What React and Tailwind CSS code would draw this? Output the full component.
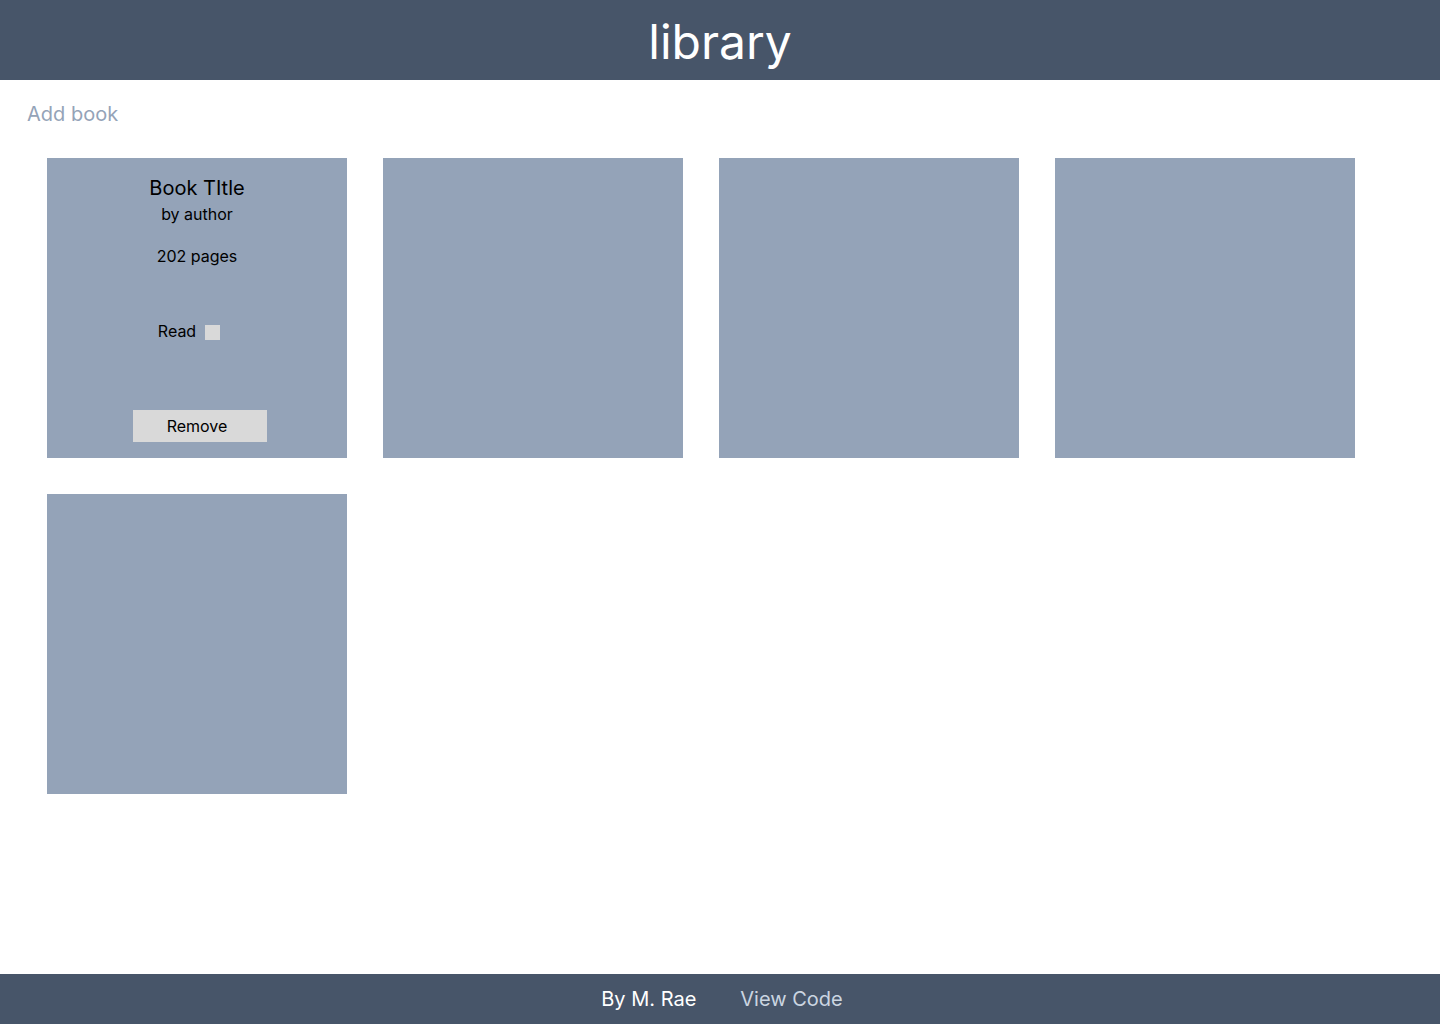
import React from 'react';

const books = [
  { title: 'Book TItle', author: 'author', pages: 202 },
  null,
  null,
  null,
  null,
];

function BookCard({ book }) {
  if (!book) return <div className="w-[300px] h-[300px] bg-[#94a3b8]" />;
  return (
    <div className="w-[300px] h-[300px] bg-[#94a3b8] flex flex-col items-center pt-4 text-black">
      <h2 className="text-xl leading-7">{book.title}</h2>
      <p className="text-base leading-6">by {book.author}</p>
      <p className="text-base leading-6 mt-[18px]">{book.pages} pages</p>
      <label className="flex items-center mt-[51px] mr-4 text-base leading-6">
        Read
        <span className="ml-[9px] mt-[3px] w-[15px] h-[15px] bg-[#d9d9d9]" />
      </label>
      <button className="mt-[67px] ml-[6px] w-[134px] h-8 bg-[#d9d9d9] text-base leading-6">
        <span className="-ml-[6px]">Remove</span>
      </button>
    </div>
  );
}

export default function App() {
  return (
    <div className="min-h-screen flex flex-col bg-white" style={{ fontFamily: 'Inter, "Noto Sans", sans-serif' }}>
      <header className="h-20 bg-[#475569] flex items-center justify-center">
        <h1 className="text-5xl leading-none text-white pt-1">library</h1>
      </header>
      <main className="flex-1 px-[27px]">
        <div className="pt-5 text-xl leading-7 text-[#94a3b8]">Add book</div>
        <div className="mt-[30px] ml-5 grid grid-cols-[repeat(4,300px)] gap-9">
          {books.map((b, i) => (
            <BookCard key={i} book={b} />
          ))}
        </div>
      </main>
      <footer className="h-[50px] bg-[#475569] flex items-center justify-center gap-11 pl-1 text-xl">
        <span className="text-white">By M. Rae</span>
        <a className="text-[#cbd5e1]">View Code</a>
      </footer>
    </div>
  );
}
